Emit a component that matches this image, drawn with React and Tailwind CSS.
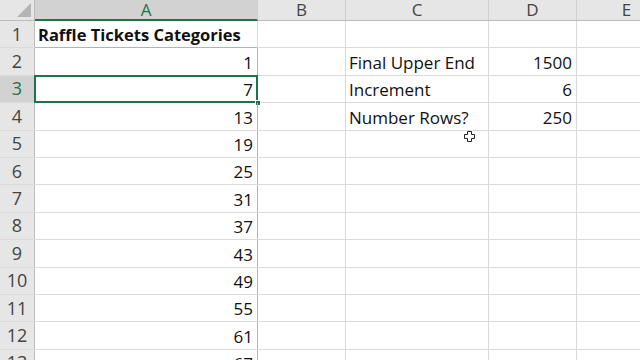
import React from 'react';

const COLS = [
  { key: 'A', w: 'w-[223px]' },
  { key: 'B', w: 'w-[88px]' },
  { key: 'C', w: 'w-[143px]' },
  { key: 'D', w: 'w-[88px]' },
  { key: 'E', w: 'w-[100px]' },
];

const side = {
  2: ['Final Upper End', '1500'],
  3: ['Increment', '6'],
  4: ['Number Rows?', '250'],
};

const rows = Array.from({ length: 13 }, (_, i) => i + 1);

const Cell = ({ className = '', children }) => (
  <div className={`h-full shrink-0 border-r border-[#dadada] flex items-end leading-[24px] ${className}`}>
    {children}
  </div>
);

export default function App() {
  return (
    <div
      className="relative w-[640px] h-[360px] overflow-hidden bg-white text-[17px] text-[#111]"
      style={{ fontFamily: '"Open Sans", "Liberation Sans", sans-serif' }}
    >
      {/* column headers */}
      <div className="flex h-[21px] bg-[#e6e6e6] border-b border-[#bcbcbc]">
        <div className="w-[35px] shrink-0 border-r border-[#bcbcbc] relative">
          <div className="absolute right-[3px] bottom-[3px] w-0 h-0 border-l-[14px] border-l-transparent border-b-[14px] border-b-[#b4b4b4]" />
        </div>
        {COLS.map((c) => (
          <div
            key={c.key}
            className={`${c.w} shrink-0 border-r border-[#cfcfcf] flex items-center justify-center leading-[20px] text-[17px] ${
              c.key === 'A' ? 'bg-[#d2d2d2] text-[#217346] border-b-2 border-b-[#217346] -mb-px' : 'text-[#444]'
            }`}
          >
            {c.key}
          </div>
        ))}
      </div>

      {rows.map((r) => {
        const selected = r === 3;
        const value = r >= 2 ? String(1 + (r - 2) * 6) : '';
        const [label, num] = side[r] || ['', ''];
        return (
          <div key={r} className="flex h-[27.4px] border-b border-[#dadada]">
            <div
              className={`w-[35px] shrink-0 border-r border-[#bcbcbc] flex items-center justify-center text-[18px] ${
                selected ? 'bg-[#d2d2d2] text-[#217346]' : 'bg-[#e6e6e6] text-[#444]'
              }`}
            >
              {r}
            </div>

            {/* column A */}
            <Cell
              className={`w-[223px] relative ${
                r >= 2 ? 'border-r-[#a3b6cc] justify-end pr-[4px]' : 'pl-[3px] font-bold text-[16.5px]'
              }`}
            >
              {r === 1 ? 'Raffle Tickets Categories' : value}
              {r === 2 && <div className="absolute left-0 right-0 -top-px h-px bg-[#a3b6cc]" />}
              {selected && (
                <>
                  <div className="absolute -left-px -top-px right-[-1px] bottom-[-1px] border-2 border-[#217346]" />
                  <div className="absolute right-[-4px] bottom-[-4px] w-[6px] h-[6px] bg-[#217346] border border-white" />
                </>
              )}
            </Cell>

            <Cell className="w-[88px]" />
            <Cell className="w-[143px] pl-[3px]">{label}</Cell>
            <Cell className="w-[88px] justify-end pr-[4px]">{num}</Cell>
            <Cell className="w-[100px]" />
          </div>
        );
      })}

      {/* mouse pointer */}
      <svg className="absolute left-[464px] top-[131px]" width="11" height="11" viewBox="0 0 11 11">
        <path d="M3.5 0.5h4v3h3v4h-3v3h-4v-3h-3v-4h3z" fill="#fff" stroke="#222" strokeWidth="1" />
      </svg>
    </div>
  );
}
